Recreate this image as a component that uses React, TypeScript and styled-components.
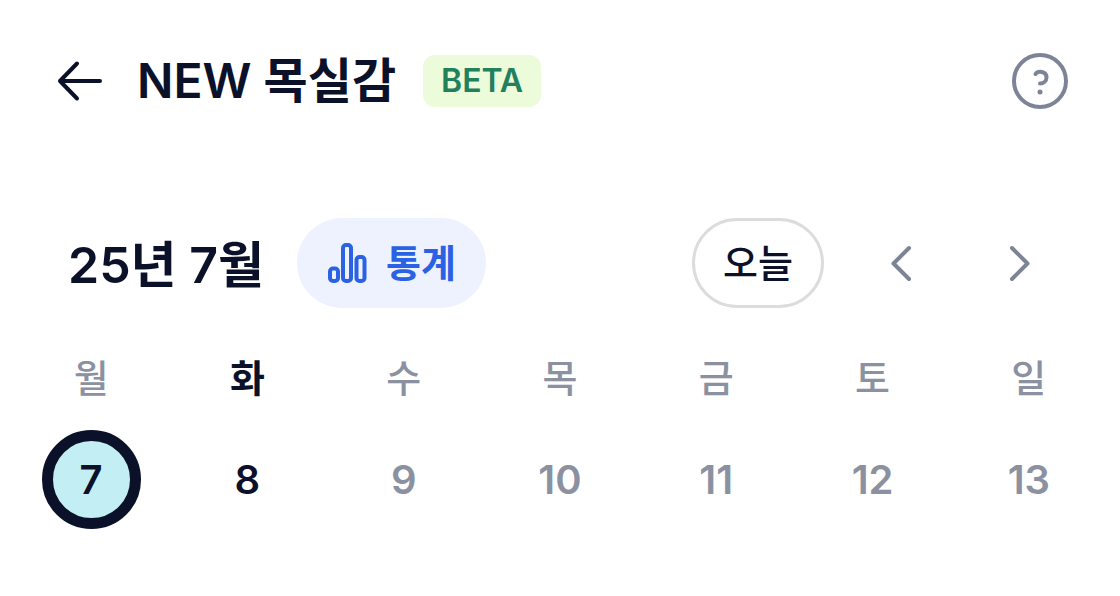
import React from "react";
import styled, { createGlobalStyle } from "styled-components";

const GlobalStyle = createGlobalStyle`
  * { box-sizing: border-box; }
  body { margin: 0; background: #fff; color: #0b1128; font-family: Inter, "Noto Sans CJK KR", sans-serif; }
  button { font: inherit; color: inherit; background: none; border: 0; padding: 0; margin: 0; }
`;

const Header = styled.header`
  display: flex;
  align-items: center;
  height: 162px;
  padding: 0 50px 0 56px;
`;

const IconButton = styled.button<{ $size: number }>`
  display: flex;
  align-items: center;
  justify-content: center;
  flex: none;
  width: ${(p) => p.$size}px;
  height: ${(p) => p.$size}px;
`;

const Title = styled.h1`
  margin: 0 27px 0 33px;
  font-size: 48px;
  line-height: 56px;
  font-weight: 600;
  white-space: nowrap;
`;

const Badge = styled.span`
  padding: 0 18px;
  border-radius: 12px;
  background: #ecfbda;
  color: #23805c;
  font-size: 32px;
  line-height: 52px;
  font-weight: 600;
`;

const HelpButton = styled(IconButton)`
  margin-left: auto;
`;

const Toolbar = styled.section`
  display: flex;
  align-items: center;
  margin-top: 56px;
  padding: 0 72px 0 68px;
`;

const Month = styled.h2`
  margin: 0 33px 0 0;
  padding-top: 4px;
  font-size: 50px;
  line-height: 56px;
  font-weight: 600;
  white-space: nowrap;
`;

const Pill = styled.button`
  display: flex;
  align-items: center;
  justify-content: center;
  gap: 18px;
  height: 90px;
  padding: 0 30px;
  border-radius: 45px;
  font-size: 38px;
  line-height: 48px;
  font-weight: 600;
  white-space: nowrap;
`;

const StatsButton = styled(Pill)`
  background: #eef2ff;
  color: #2b62e3;
`;

const TodayButton = styled(Pill)`
  margin: 0 50px 0 auto;
  padding: 0 28px;
  border: 3px solid #dcdcdf;
  font-weight: 500;
`;

const Pager = styled.nav`
  display: flex;
  gap: 62px;
  color: #7d8496;
`;

const Week = styled.table`
  width: 100%;
  margin-top: 36px;
  padding: 0 13px;
  border-spacing: 0;
  table-layout: fixed;
  font-size: 40px;
`;

const Weekday = styled.th<{ $active?: boolean }>`
  height: 68px;
  padding: 0;
  font-size: 38px;
  line-height: 48px;
  font-weight: ${(p) => (p.$active ? 600 : 500)};
  color: ${(p) => (p.$active ? "#0b1128" : "#8b91a1")};
`;

const DayCell = styled.td`
  padding: 18px 0 0;
`;

const Day = styled.button<{ $state?: "selected" | "active" }>`
  display: block;
  width: 99px;
  height: 99px;
  margin: 0 auto;
  border-radius: 50%;
  font-weight: 600;
  color: ${(p) => (p.$state ? "#0b1128" : "#8b91a1")};
  ${(p) => p.$state === "selected" && "background: #c3eff4; border: 11px solid #0b1128;"}
`;

const days = [
  { name: "월", date: 7 },
  { name: "화", date: 8 },
  { name: "수", date: 9 },
  { name: "목", date: 10 },
  { name: "금", date: 11 },
  { name: "토", date: 12 },
  { name: "일", date: 13 },
];

const stroke = {
  fill: "none",
  stroke: "currentColor",
  strokeLinecap: "round" as const,
  strokeLinejoin: "round" as const,
};

export default function App() {
  return (
    <>
      <GlobalStyle />
      <Header>
        <IconButton $size={48} aria-label="뒤로">
          <svg width="48" height="48" viewBox="0 0 48 48" {...stroke} strokeWidth="4">
            <path d="M44 24H4M21 6.500L4 24l17 17.500" />
          </svg>
        </IconButton>
        <Title>NEW 목실감</Title>
        <Badge>BETA</Badge>
        <HelpButton $size={60} aria-label="도움말">
          <svg width="60" height="60" viewBox="0 0 60 60" {...stroke} strokeWidth="4" color="#7d8496">
            <circle cx="30" cy="30" r="26" />
            <path d="M25.500 23C28 19.500 36.500 20 36.500 26.500c0 4-3.500 6-6.500 6" />
            <circle cx="30" cy="41" r="2.500" fill="currentColor" stroke="none" />
          </svg>
        </HelpButton>
      </Header>
      <main>
        <Toolbar>
          <Month>25년 7월</Month>
          <StatsButton>
            <svg width="41" height="42" viewBox="0 0 41 42" {...stroke} strokeWidth="4">
              <rect x="3" y="26.500" width="8" height="12.500" rx="3" />
              <rect x="16" y="3" width="8" height="36" rx="3" />
              <rect x="29.500" y="15" width="8" height="24" rx="3" />
            </svg>
            통계
          </StatsButton>
          <TodayButton>오늘</TodayButton>
          <Pager>
            <IconButton $size={56} aria-label="이전 주">
              <svg width="56" height="56" viewBox="0 0 56 56" {...stroke} strokeWidth="4">
                <path d="M35 13L19.500 28.500l15.500 15.500" />
              </svg>
            </IconButton>
            <IconButton $size={56} aria-label="다음 주">
              <svg width="56" height="56" viewBox="0 0 56 56" {...stroke} strokeWidth="4">
                <path d="M20 13l15.500 15.500-15.500 15.500" />
              </svg>
            </IconButton>
          </Pager>
        </Toolbar>
        <Week>
          <thead>
            <tr>
              {days.map((d) => (
                <Weekday key={d.date} scope="col" $active={d.date === 8}>{d.name}</Weekday>
              ))}
            </tr>
          </thead>
          <tbody>
            <tr>
              {days.map((d) => (
                <DayCell key={d.date}>
                  <Day $state={d.date === 7 ? "selected" : d.date === 8 ? "active" : undefined}>{d.date}</Day>
                </DayCell>
              ))}
            </tr>
          </tbody>
        </Week>
      </main>
    </>
  );
}
